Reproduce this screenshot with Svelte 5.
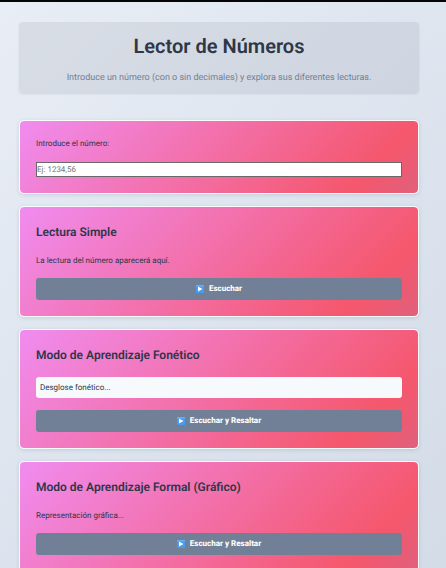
<script>
  let number = $state('');
</script>

{#snippet playIcon()}
  <svg class="play" viewBox="0 0 16 16" aria-hidden="true">
    <rect width="16" height="16" rx="1" fill="#4a9af0" />
    <path d="M0 1a1 1 0 0 1 1-1h14a1 1 0 0 1 1 1v2H0z" fill="#67aff5" />
    <path d="M4 3l9 5-9 5z" fill="#fff" />
  </svg>
{/snippet}

<div class="page">
  <header>
    <h1>Lector de Números</h1>
    <p>Introduce un número (con o sin decimales) y explora sus diferentes lecturas.</p>
  </header>

  <main>
    <section class="card">
      <label for="number">Introduce el número:</label>
      <input id="number" type="text" placeholder="Ej: 1234,56" bind:value={number} />
    </section>

    <section class="card">
      <h2>Lectura Simple</h2>
      <p class="result">La lectura del número aparecerá aquí.</p>
      <button type="button">{@render playIcon()}Escuchar</button>
    </section>

    <section class="card">
      <h2>Modo de Aprendizaje Fonético</h2>
      <div class="phonetic">Desglose fonético...</div>
      <button type="button">{@render playIcon()}Escuchar y Resaltar</button>
    </section>

    <section class="card">
      <h2>Modo de Aprendizaje Formal (Gráfico)</h2>
      <p class="result">Representación gráfica...</p>
      <button type="button">{@render playIcon()}Escuchar y Resaltar</button>
    </section>
  </main>
</div>

<style>
  :global(body) {
    margin: 0;
    overflow: hidden;
  }

  .page {
    box-sizing: border-box;
    min-height: 100vh;
    padding: 20px 27px 20px 19px;
    border-top: 2px solid #050507;
    background: linear-gradient(135deg, #e9edf5 0%, #dfe6f0 40%, #d3dbe7 100%);
    color: #2d3748;
    font-family: Roboto, sans-serif;
    font-size: 8px;
    line-height: 12px;
    text-rendering: geometricPrecision;
  }

  header {
    padding: 12px 16px 8px;
    margin-bottom: 27px;
    border-radius: 4px;
    background: linear-gradient(135deg, #d8dde5, #ced5e1);
    box-shadow: 0 1px 2px rgba(45, 55, 72, 0.12);
    text-align: center;
  }

  h1 {
    margin: 0 0 13px;
    font-size: 20px;
    line-height: 24px;
    font-weight: 600;
  }

  header p {
    margin: 0;
    color: #718096;
    font-size: 9px;
    line-height: 14px;
  }

  main {
    display: flex;
    flex-direction: column;
    gap: 12px;
  }

  .card {
    display: flex;
    flex-direction: column;
    padding: 16px;
    border: 1px solid rgba(255, 255, 255, 0.8);
    border-radius: 5px;
    background: linear-gradient(135deg, #f08cf0 0%, #f5576c 85%, #e0607c 100%) padding-box;
    box-shadow: 0 1px 4px rgba(45, 55, 72, 0.14);
  }

  label {
    padding-top: 1px;
    margin-bottom: 12px;
  }

  input {
    box-sizing: border-box;
    width: 100%;
    height: 15px;
    padding: 0;
    border: 1px solid #696969;
    border-radius: 0;
    background: #fff;
    color: #2d3748;
    font: inherit;
    text-rendering: inherit;
  }

  input::placeholder {
    color: #757575;
  }

  h2 {
    margin: 0 0 12px;
    font-size: 12px;
    line-height: 19px;
    font-weight: 600;
  }

  .result {
    margin: 0 0 11px;
    padding-top: 1px;
  }

  .phonetic {
    margin-bottom: 12px;
    padding: 5px 4px;
    border-radius: 3px;
    background: #f7fafc;
    line-height: 11px;
  }

  button {
    display: flex;
    align-items: center;
    justify-content: center;
    gap: 5px;
    width: 100%;
    height: 22px;
    padding: 0;
    border: 0;
    border-radius: 3px;
    background: #718096;
    color: #fff;
    font: inherit;
    font-weight: 800;
    text-rendering: inherit;
    cursor: pointer;
  }

  .play {
    width: 8px;
    height: 8px;
  }
</style>
